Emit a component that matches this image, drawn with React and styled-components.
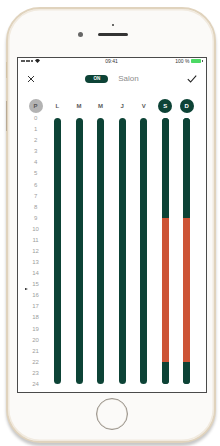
import React from "react";
import styled, { createGlobalStyle } from "styled-components";

const GREEN = "#0d4336";
const ORANGE = "#cd5436";
const HOUR = 11.08;
const COLS = "22.2px repeat(7, 21.55px)";

const Global = createGlobalStyle`
  body {
    margin: 0;
    background: #ffffff;
    font-family: "Liberation Sans", Arial, sans-serif;
  }
`;

const Page = styled.div`
  width: 220px;
  height: 446px;
  padding: 7px 0 0 6px;
  box-sizing: border-box;
`;

const Phone = styled.div`
  position: relative;
  width: 210px;
  height: 436px;
  box-sizing: border-box;
  border: 2.5px solid #e0d3bd;
  border-radius: 34px;
  background: #fbfaf8;
  box-shadow: inset 0 0 0 1.5px #f1eadf, 0 3px 3px rgba(0, 0, 0, 0.22);
  display: flex;
  flex-direction: column;
  align-items: center;

  /* side keys */
  &::before {
    content: "";
    position: absolute;
    left: -2.5px;
    top: 53px;
    width: 1.5px;
    height: 16px;
    background: #d2c2a6;
  }
  &::after {
    content: "";
    position: absolute;
    left: -2.5px;
    top: 92px;
    width: 1.5px;
    height: 30px;
    background: #b9aa94;
  }
`;

const TopBar = styled.div`
  height: 47.5px;
  box-sizing: border-box;
  padding-top: 14.5px;
  display: flex;
  flex-direction: column;
  align-items: center;
  gap: 6px;
  margin-left: 3px;
`;

const Sensor = styled.div`
  width: 2px;
  height: 2px;
  border-radius: 50%;
  background: #3a3a3a;
`;

const EarRow = styled.div`
  display: flex;
  align-items: center;
  gap: 15px;
`;

const Camera = styled.div`
  width: 5px;
  height: 5px;
  border-radius: 50%;
  background: ${(p) => (p.$ghost ? "transparent" : "#666")};
`;

const Speaker = styled.div`
  width: 30px;
  height: 3px;
  border-radius: 2px;
  background: #333;
`;

const Screen = styled.div`
  align-self: flex-start;
  margin-left: 8.5px;
  width: 190px;
  height: 336px;
  box-sizing: border-box;
  border: 1px solid #4a4a4a;
  background: #fff;
  display: flex;
  flex-direction: column;
`;

const StatusBar = styled.div`
  height: 7px;
  padding: 0 3px;
  display: grid;
  grid-template-columns: 1fr auto 1fr;
  align-items: center;
  font-size: 5px;
  color: #333;
`;

const Signal = styled.div`
  display: flex;
  align-items: center;
  gap: 0.6px;
`;

const Dot = styled.span`
  width: 2px;
  height: 2px;
  border-radius: 50%;
  background: #222;
`;

const Clock = styled.span`
  font-weight: 400;
`;

const Battery = styled.div`
  display: flex;
  align-items: center;
  justify-content: flex-end;
  gap: 1.5px;
`;

const BatteryCell = styled.span`
  width: 10px;
  height: 3.5px;
  border-radius: 0.8px;
  background: #4cd964;
`;

const BatteryTip = styled.span`
  width: 1px;
  height: 2px;
  background: #555;
  margin-left: -1px;
`;

const Header = styled.div`
  height: 28px;
  padding: 0 9px 0 9px;
  display: flex;
  align-items: center;
  justify-content: space-between;
`;

const Center = styled.div`
  display: flex;
  align-items: center;
  gap: 10px;
  margin-left: 3px;
`;

const Pill = styled.span`
  width: 23px;
  height: 8px;
  border-radius: 4px;
  background: ${GREEN};
  color: #fff;
  font-size: 4.5px;
  font-weight: 700;
  display: flex;
  align-items: center;
  justify-content: center;
`;

const Room = styled.span`
  font-size: 8px;
  color: #8c8c8c;
`;

const Grid = styled.div`
  display: grid;
  grid-template-columns: ${COLS};
  padding-left: 7px;
`;

const DayRow = styled(Grid)`
  height: 14px;
  margin-top: 6px;
  align-items: center;
  justify-items: center;
`;

const Day = styled.span`
  width: 14px;
  height: 14px;
  border-radius: 50%;
  display: flex;
  align-items: center;
  justify-content: center;
  font-size: 6px;
  font-weight: 700;
  background: ${(p) =>
    p.$kind === "today" ? "#b3b3b3" : p.$kind === "weekend" ? GREEN : "transparent"};
  color: ${(p) =>
    p.$kind === "today" ? "#555" : p.$kind === "weekend" ? "#fff" : "#5a5a5a"};
`;

const HourGrid = styled(Grid)`
  justify-items: center;
`;

const Hours = styled.div`
  position: relative;
  width: 100%;
  display: flex;
  flex-direction: column;
`;

const HourLabel = styled.span`
  height: ${HOUR}px;
  display: flex;
  align-items: center;
  justify-content: center;
  font-size: 6px;
  color: #9d9d9d;
`;

const NowMarker = styled.span`
  position: absolute;
  left: 0;
  width: 0;
  height: 0;
  border-top: 1.8px solid transparent;
  border-bottom: 1.8px solid transparent;
  border-left: 3.5px solid #1a1a1a;
`;

const Bar = styled.div`
  width: 7px;
  height: ${24 * HOUR}px;
  margin-top: ${HOUR / 2}px;
  border-radius: 3.5px;
  background: ${GREEN};
  overflow: hidden;
  display: flex;
  flex-direction: column;
`;

const Segment = styled.div`
  background: ${(p) => (p.$on ? ORANGE : GREEN)};
`;

const HomeButton = styled.div`
  margin-top: 5px;
  width: 32px;
  height: 32px;
  box-sizing: border-box;
  border-radius: 50%;
  border: 1.5px solid #9a948c;
  background: #fbfaf8;
  box-shadow: inset 0 0 0 0.6px #d9d2c6;
  margin-left: 2px;
`;

const days = [
  { l: "P", kind: "today" },
  { l: "L" },
  { l: "M" },
  { l: "M" },
  { l: "J" },
  { l: "V" },
  { l: "S", kind: "weekend", on: [9, 22] },
  { l: "D", kind: "weekend", on: [9, 22] },
];

const hours = Array.from({ length: 25 }, (_, i) => i);

const Close = () => (
  <svg width="8" height="8" viewBox="0 0 8 8">
    <path d="M1 1L7 7M7 1L1 7" stroke="#333" strokeWidth="1" />
  </svg>
);

const Check = () => (
  <svg width="10" height="8" viewBox="0 0 10 8">
    <path d="M0.8 4.2L3.6 7L9.2 0.6" stroke="#222" strokeWidth="1.1" fill="none" />
  </svg>
);

const Wifi = () => (
  <svg width="5" height="4" viewBox="0 0 10 8">
    <path d="M0 2.8A7 7 0 0 1 10 2.8L5 8Z" fill="#222" />
  </svg>
);

const DayBar = ({ on }) => {
  if (!on) return <Bar />;
  const [a, b] = on;
  return (
    <Bar>
      <Segment style={{ height: `${(a / 24) * 100}%` }} />
      <Segment $on style={{ height: `${((b - a) / 24) * 100}%` }} />
      <Segment style={{ flex: 1 }} />
    </Bar>
  );
};

export default function App() {
  return (
    <Page>
      <Global />
      <Phone>
        <TopBar>
          <Sensor />
          <EarRow>
            <Camera />
            <Speaker />
            <Camera $ghost />
          </EarRow>
        </TopBar>
        <Screen>
          <StatusBar>
            <Signal>
              <Dot />
              <Dot />
              <Dot />
              <Dot />
              <Dot />
              <span style={{ width: 1 }} />
              <Wifi />
            </Signal>
            <Clock>09:41</Clock>
            <Battery>
              <span>100 %</span>
              <BatteryCell />
              <BatteryTip />
            </Battery>
          </StatusBar>
          <Header>
            <Close />
            <Center>
              <Pill>ON</Pill>
              <Room>Salon</Room>
            </Center>
            <Check />
          </Header>
          <DayRow>
            {days.map((d, i) => (
              <Day key={i} $kind={d.kind}>
                {d.l}
              </Day>
            ))}
          </DayRow>
          <HourGrid>
            <Hours>
              {hours.map((h) => (
                <HourLabel key={h}>{h}</HourLabel>
              ))}
              <NowMarker style={{ top: `${16 * HOUR - 1.8}px` }} />
            </Hours>
            {days.slice(1).map((d, i) => (
              <DayBar key={i} on={d.on} />
            ))}
          </HourGrid>
        </Screen>
        <HomeButton />
      </Phone>
    </Page>
  );
}
